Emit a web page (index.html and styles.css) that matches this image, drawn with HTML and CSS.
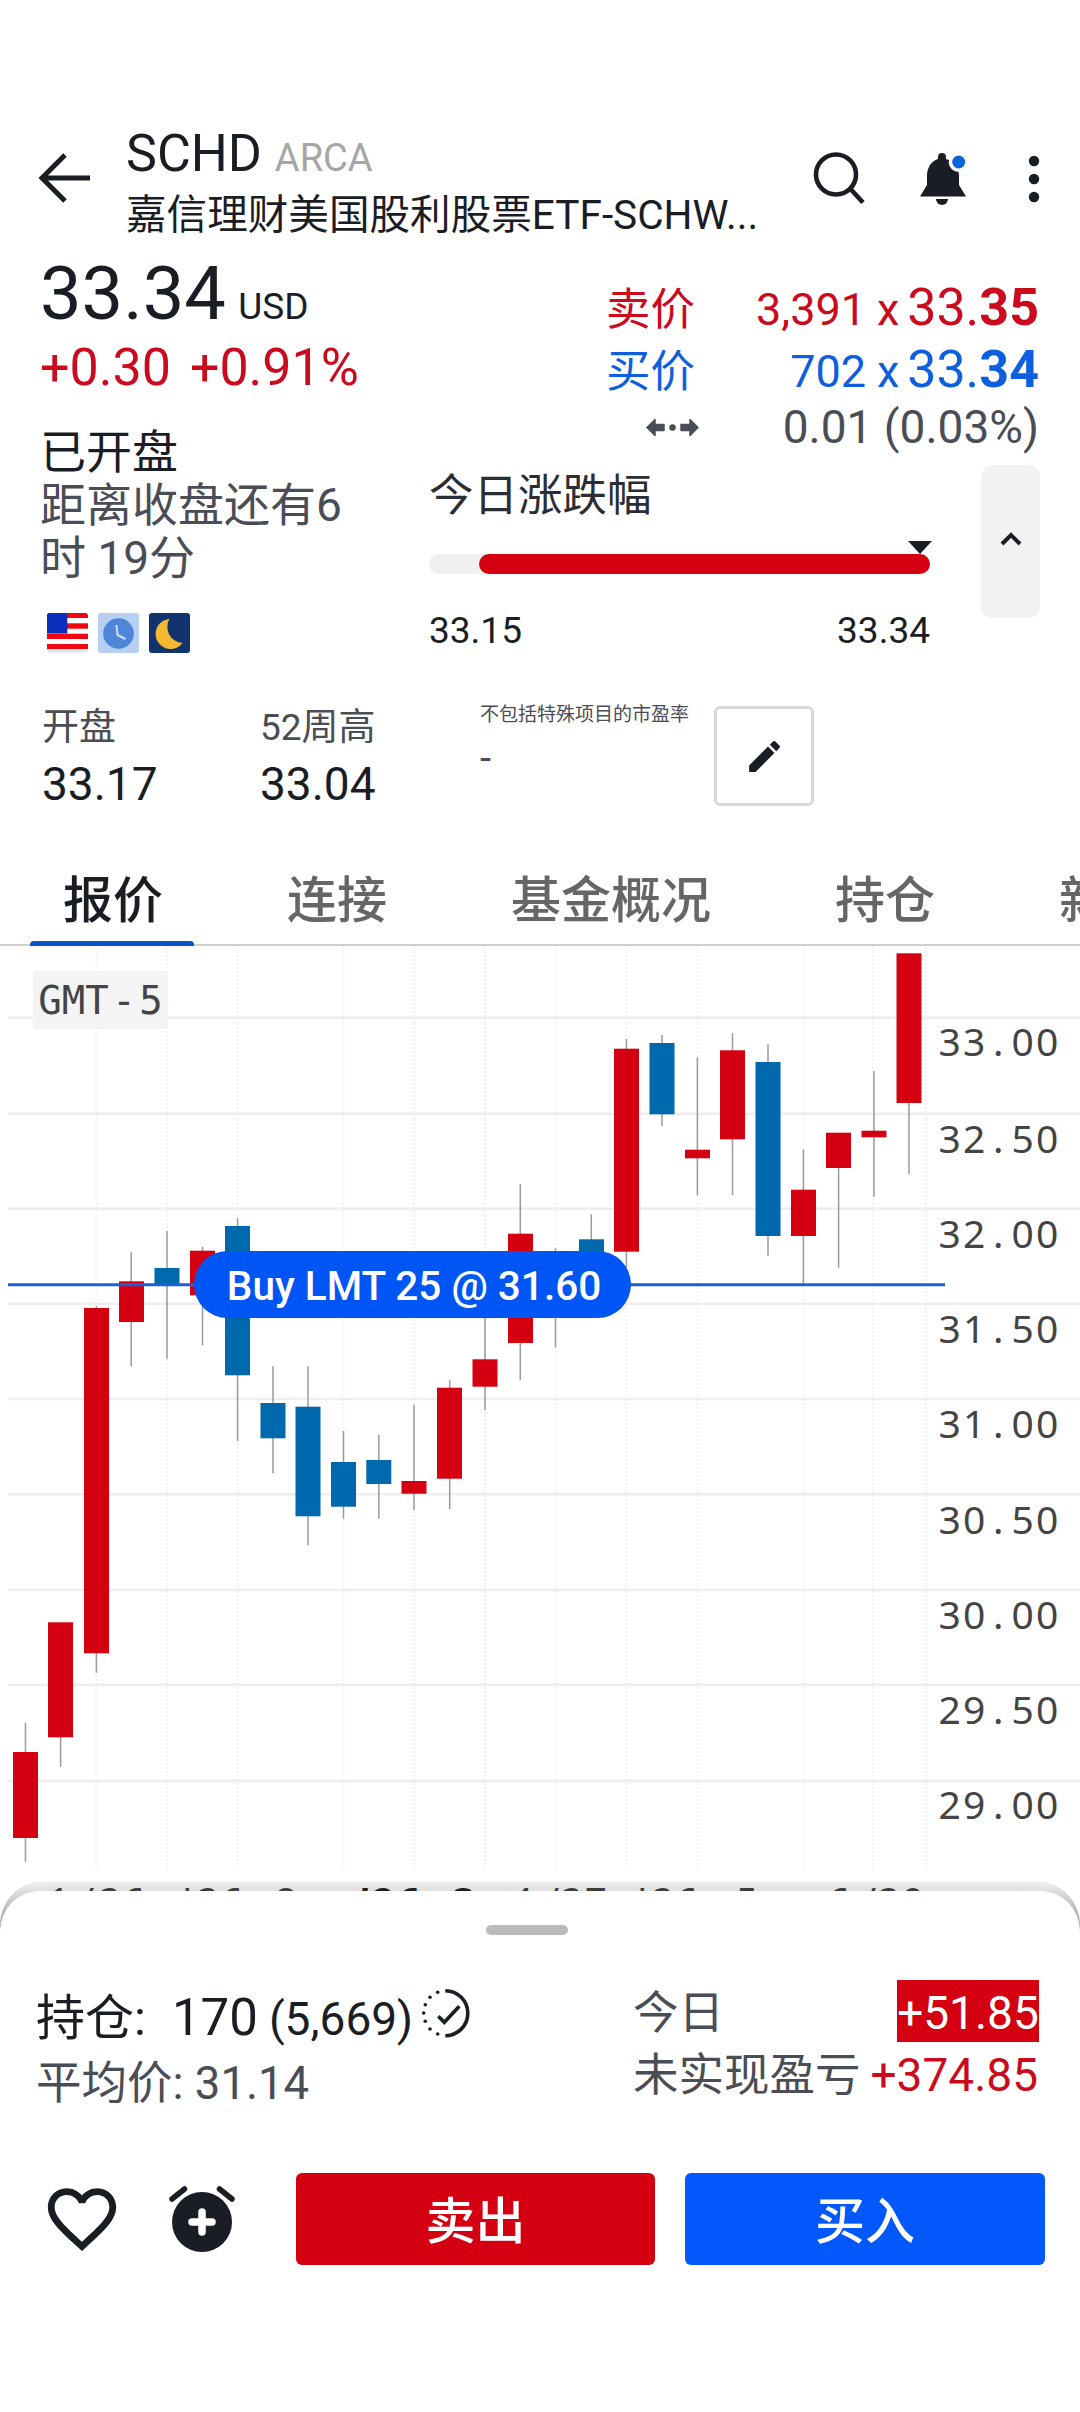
FILE: index.html
```html
<!DOCTYPE html>
<html lang="zh">
<head>
<meta charset="utf-8">
<title>SCHD</title>
<link rel="stylesheet" href="styles.css">
</head>
<body>
<div class="app">
  <header class="header">
    <svg class="back" viewBox="0 0 54 52"><path d="M52 26H4M27 3L4 26L27 49"/></svg>
    <div class="title-block">
      <div class="title"><span class="sym">SCHD</span> <span class="exch">ARCA</span></div>
      <div class="subtitle">嘉信理财美国股利股票ETF-SCHW...</div>
    </div>
    <div class="head-icons">
      <svg class="ic-search" viewBox="0 0 52 52"><circle cx="23" cy="22.5" r="20"/><path d="M37.5 37L50 50.5"/></svg>
      <svg class="ic-bell" viewBox="0 0 50 54"><path class="ink" d="M24 1a4 4 0 0 1 4 4v2C36 9 41 16 41 24V33L48 44.5H2L9 33V24C9 16 13 9 20 7V5a4 4 0 0 1 4-4z"/><path class="ink" d="M18 47h12a6 6 0 0 1-12 0z"/><circle class="ring" cx="40.7" cy="10" r="10"/><circle class="dot" cx="40.7" cy="10" r="6.5"/></svg>
      <svg class="ic-more" viewBox="0 0 12 48"><circle cx="6" cy="6" r="5.2"/><circle cx="6" cy="24" r="5.2"/><circle cx="6" cy="42" r="5.2"/></svg>
    </div>
  </header>

  <section class="summary">
    <div class="left-col">
      <div class="price"><span class="last">33.34</span> <span class="ccy">USD</span></div>
      <div class="change"><span>+0.30</span><span>+0.91%</span></div>
      <div class="status">
        <div class="status-main">已开盘</div>
        <div class="status-sub">距离收盘还有6<br>时 19分</div>
      </div>
      <div class="flags">
        <svg class="flag" viewBox="0 0 41 40"><rect width="41" height="40" fill="#fff"/><rect width="41" height="5" fill="#f00511"/><rect y="10.3" width="41" height="5.4" fill="#f00511"/><rect y="20.7" width="41" height="5.3" fill="#f00511"/><rect y="31" width="41" height="5" fill="#f00511"/><rect y="36" width="41" height="4" fill="#e9e9e9"/><rect width="20.3" height="20.5" fill="#0a2dbd"/></svg>
        <svg class="flag" viewBox="0 0 41 40"><rect width="41" height="40" fill="#b7cff0"/><circle cx="20.5" cy="20.5" r="15.3" fill="#4f86d8"/><path d="M18.5 12L19.5 22L27.5 26" fill="none" stroke="#cfe0f7" stroke-width="2"/></svg>
        <svg class="flag" viewBox="0 0 41 40"><rect width="41" height="40" fill="#12346e"/><path d="M20.5 6A15 15 0 1 0 33.5 30A16 16 0 0 1 20.5 6z" fill="#f5b92f"/></svg>
      </div>
    </div>
    <div class="right-col">
      <div class="quote ask"><span class="q-label">卖价</span><span class="q-val"><span class="q-size">3,391</span> <span class="q-size q-x">x</span> <span>33.<b>35</b></span></span></div>
      <div class="quote bid"><span class="q-label">买价</span><span class="q-val"><span class="q-size">702</span> <span class="q-size q-x">x</span> <span>33.<b>34</b></span></span></div>
      <div class="spread">
        <svg class="ic-spread" viewBox="0 0 53 19"><path d="M1 9.5L9 1.5V6.5H18V12.5H9V17.5zM52 9.5L44 1.5V6.5H35V12.5H44V17.5z"/><circle cx="26.5" cy="9.5" r="2.5"/></svg>
        <span>0.01 (0.03%)</span>
      </div>
      <div class="range-row">
        <div class="range">
          <div class="range-title">今日涨跌幅</div>
          <div class="bar"><div class="bar-fill"></div><div class="bar-mark"></div></div>
          <div class="range-labels"><span>33.15</span><span>33.34</span></div>
        </div>
        <div class="collapse"><svg viewBox="0 0 22 14"><path d="M2 12L11 3L20 12"/></svg></div>
      </div>
    </div>
  </section>

  <section class="stats">
    <div class="stat stat-a"><div class="stat-label">开盘</div><div class="stat-val">33.17</div></div>
    <div class="stat stat-b"><div class="stat-label">52周高</div><div class="stat-val">33.04</div></div>
    <div class="stat stat-c"><div class="stat-small">不包括特殊项目的市盈率</div><div class="stat-dash">-</div></div>
    <div class="edit"><svg viewBox="0 0 24 24"><path d="M3 17.25V21h3.75L17.81 9.94l-3.75-3.75L3 17.25zM20.71 7.04c.39-.39.39-1.02 0-1.41l-2.34-2.34c-.39-.39-1.02-.39-1.41 0l-1.83 1.83 3.75 3.75 1.83-1.83z"/></svg></div>
  </section>

  <nav class="tabs">
    <div class="tab active">报价</div>
    <div class="tab">连接</div>
    <div class="tab">基金概况</div>
    <div class="tab">持仓</div>
    <div class="tab">新闻</div>
  </nav>

  <section class="chart">
    <svg class="plot" viewBox="0 946 1080 966">
      <path class="vgrid" d="M96.4 947V1870M167 947V1870M237.6 947V1870M343.3 947V1870M414 947V1870M485 947V1870M555.5 947V1870M626.4 947V1870M697.4 947V1870M803.4 947V1870M873 947V1870M926 947V1870"/>
      <path class="hgrid" d="M8 1017.7H1080M8 1113.7H1080M8 1208.7H1080M8 1303.7H1080M8 1399H1080M8 1494.3H1080M8 1590H1080M8 1684.7H1080M8 1781H1080"/>
      <path class="wick" d="M25.5 1722.7V1861.7M60.6 1737V1766.7M96.4 1305.7V1672.7M131.2 1252.3V1366.3M167 1231V1358.7M202.5 1246.7V1345.3M237.6 1218.3V1441M273 1366.3V1473.3M308 1366.3V1545.3M343.5 1431V1518.7M378.8 1435V1518.7M414 1404.7V1510M449.7 1380V1509M485 1270V1410M520.3 1184V1380M555.5 1248.3V1347.3M591.3 1214.3V1270M626.4 1039V1268M662 1035V1126.3M697.4 1057.3V1195.3M732.5 1033.3V1195M768 1044.3V1255.7M803.4 1149.3V1283.3M838.6 1132.7V1267.7M874 1071V1196.7M909 1103V1174"/>
      <rect class="up" x="13" y="1752" width="25" height="86"/>
      <rect class="up" x="48" y="1622.3" width="25" height="115"/>
      <rect class="up" x="84" y="1308" width="25" height="345.3"/>
      <rect class="up" x="119" y="1281.3" width="25" height="40.7"/>
      <rect class="down" x="154.5" y="1268" width="25" height="16"/>
      <rect class="up" x="190" y="1250.7" width="25" height="44.6"/>
      <rect class="down" x="225" y="1226" width="25" height="149.3"/>
      <rect class="down" x="260.5" y="1403" width="25" height="35.3"/>
      <rect class="down" x="295.5" y="1406.7" width="25" height="109.6"/>
      <rect class="down" x="331" y="1462" width="25" height="44.7"/>
      <rect class="down" x="366.3" y="1460" width="25" height="24"/>
      <rect class="up" x="401.5" y="1481" width="25" height="12.7"/>
      <rect class="up" x="437" y="1387.7" width="25" height="91"/>
      <rect class="up" x="472.5" y="1359.3" width="25" height="27.4"/>
      <rect class="up" x="508" y="1233.7" width="25" height="109.3"/>
      <rect class="down" x="579" y="1239.3" width="25" height="24"/>
      <rect class="up" x="614" y="1048.7" width="25" height="203"/>
      <rect class="down" x="649.5" y="1043" width="25" height="71.3"/>
      <rect class="up" x="685" y="1149.7" width="25" height="8.6"/>
      <rect class="up" x="720" y="1050.3" width="25" height="89"/>
      <rect class="down" x="755.5" y="1062" width="25" height="174"/>
      <rect class="up" x="791" y="1189.7" width="25" height="46.3"/>
      <rect class="up" x="826" y="1132.7" width="25" height="35.3"/>
      <rect class="up" x="861.5" y="1130.7" width="25" height="6.6"/>
      <rect class="up" x="896.5" y="953.3" width="25" height="149.7"/>
      <path class="order-line" d="M8 1284.7H945"/>
      <text class="axis" x="938.5 963 993 1011.5 1036" y="1056">33.00</text>
      <text class="axis" x="938.5 963 993 1011.5 1036" y="1152.7">32.50</text>
      <text class="axis" x="938.5 963 993 1011.5 1036" y="1247.5">32.00</text>
      <text class="axis" x="938.5 963 993 1011.5 1036" y="1342.7">31.50</text>
      <text class="axis" x="938.5 963 993 1011.5 1036" y="1438">31.00</text>
      <text class="axis" x="938.5 963 993 1011.5 1036" y="1534">30.50</text>
      <text class="axis" x="938.5 963 993 1011.5 1036" y="1628.7">30.00</text>
      <text class="axis" x="938.5 963 993 1011.5 1036" y="1723.5">29.50</text>
      <text class="axis" x="938.5 963 993 1011.5 1036" y="1819">29.00</text>
      <text class="xlabel" x="48 80 99 123" y="1915">1/26</text>
      <text class="xlabel" x="183 197 221 250 275" y="1915">'26 8</text>
      <text class="xlabel bold" x="360 372 398 430 453" y="1915">'26 3</text>
      <text class="xlabel" x="511 545 561 585" y="1915">4/27</text>
      <text class="xlabel" x="638 652 676 710 736" y="1915">'26 5</text>
      <text class="xlabel" x="828 862 878 902" y="1915">6/20</text>
    </svg>
    <div class="tz">GMT - 5</div>
    <div class="order-pill">Buy LMT 25 @ 31.60</div>
  </section>

  <div class="sheet-wrap">
    <div class="sheet">
      <div class="handle"></div>
      <div class="position">
        <div class="pos-left">
          <div class="pos-line"><span class="pos-label">持仓:</span><span class="pos-qty">170</span><span class="pos-val">(5,669)</span>
            <svg class="ic-check" viewBox="410 1980 70 70"><path class="arc" d="M444.3 1991.7A22.5 22.5 0 0 1 444.3 2036.7"/><path class="arc" d="M437.3 2017.3L443.3 2023.3L458.3 2007.3"/><g class="dots"><circle cx="436.7" cy="1993.3" r="1.8"/><circle cx="429" cy="1998.3" r="1.8"/><circle cx="424.3" cy="2005.7" r="1.8"/><circle cx="422.7" cy="2014" r="1.8"/><circle cx="424.3" cy="2022.3" r="1.8"/><circle cx="429" cy="2030" r="1.8"/><circle cx="436.7" cy="2035" r="1.8"/></g></svg>
          </div>
          <div class="pos-avg">平均价: 31.14</div>
        </div>
        <div class="pos-right">
          <div class="pnl-row"><span class="pnl-label">今日</span><span class="pnl-today">+51.85</span></div>
          <div class="pnl-row second"><span class="pnl-label">未实现盈亏</span><span class="pnl-total">+374.85</span></div>
        </div>
      </div>
      <div class="actions">
        <svg class="ic-heart" viewBox="0 0 24 24"><path d="M16.5 3c-1.74 0-3.41.81-4.5 2.09C10.91 3.81 9.24 3 7.5 3 4.42 3 2 5.42 2 8.5c0 3.78 3.4 6.86 8.55 11.54L12 21.35l1.45-1.32C18.6 15.36 22 12.28 22 8.5 22 5.42 19.58 3 16.5 3zm-4.4 15.55l-.1.1-.1-.1C7.14 14.24 4 11.39 4 8.5 4 6.5 5.5 5 7.5 5c1.54 0 3.04.99 3.57 2.36h1.87C13.46 5.99 14.96 5 16.5 5c2 0 3.5 1.5 3.5 3.5 0 2.89-3.14 5.74-7.9 10.05z"/></svg>
        <svg class="ic-alarm" viewBox="0 0 80 92"><circle class="bodyc" cx="40" cy="49" r="30"/><path class="ears" d="M10 26L22.5 16M57.5 16L70 26"/><path class="plus" d="M40 39V59M30 49H50"/></svg>
        <button class="btn sell">卖出</button>
        <button class="btn buy">买入</button>
      </div>
    </div>
  </div>
</div>
</body>
</html>
```

FILE: styles.css
```css
* { box-sizing: border-box; margin: 0; padding: 0; }
html, body { width: 1080px; height: 2412px; background: #fff; overflow: hidden; }
body { font-family: Roboto, "Noto Sans CJK SC", sans-serif; color: #1a1d24; }
.app { position: relative; width: 1080px; height: 2412px; padding-top: 124px; overflow: hidden; background: #fff; }

/* header */
.header { display: flex; height: 118px; padding-left: 38px; }
.back { width: 54px; height: 52px; margin-top: 28px; flex: none; fill: none; stroke: #1a1d24; stroke-width: 5; }
.title-block { margin-left: 34px; flex: 1; min-width: 0; }
.title { font-size: 52px; line-height: 60px; white-space: nowrap; }
.exch { font-size: 38px; line-height: 1; color: #a6a6a6; margin-left: 0; }
.subtitle { font-size: 40.6px; line-height: 50px; margin-top: 6px; white-space: nowrap; }
.head-icons { display: flex; align-items: flex-start; margin-top: 28px; flex: none; width: 267px; }
.ic-search { width: 52px; height: 52px; fill: none; stroke: #1a1d24; stroke-width: 4.6; }
.ic-bell { width: 50px; height: 54px; margin-left: 53px; }
.ic-bell .ink { fill: #1a1d24; }
.ic-bell .ring { fill: #fff; }
.ic-bell .dot { fill: #0a66d8; }
.ic-more { width: 12px; height: 48px; margin-left: 60px; margin-top: 3px; fill: #1a1d24; }

/* summary */
.summary { display: flex; }
.left-col { width: 429px; padding-left: 40px; flex: none; }
.price { margin-top: 12px; font-size: 74px; line-height: 80px; white-space: nowrap; }
.ccy { font-size: 37px; line-height: 1; margin-left: -6px; }
.change { display: flex; gap: 19px; margin-top: 4px; font-size: 52px; line-height: 60px; color: #cc0a1e; }
.status { margin-top: 28px; padding-bottom: 1px; line-height: 53px; font-size: 46px; }
.status-sub { color: #4a4d55; }
.flags { display: flex; gap: 10px; margin-top: 27px; margin-left: 7px; }
.flag { width: 41px; height: 40px; border-radius: 3px; }

.right-col { width: 611px; flex: none; }
.quote { display: flex; justify-content: space-between; align-items: baseline; margin-left: 177px; width: 433px; font-size: 52px; line-height: 58px; white-space: nowrap; }
.ask { margin-top: 37px; color: #cc0a1e; }
.bid { margin-top: 4px; color: #0d5fe0; }
.quote b { font-weight: 700; }
.q-label { font-size: 44.5px; line-height: 1; }
.q-val { word-spacing: -2px; }
.q-size { font-size: 45px; line-height: 1; }
.q-x { margin-right: -3px; }
.spread { display: flex; justify-content: space-between; align-items: center; margin-left: 217px; width: 393px; margin-top: 3px; font-size: 46px; line-height: 50px; color: #4a4d55; }
.ic-spread { width: 53px; height: 19px; fill: #4a4d55; stroke: #4a4d55; stroke-width: 1.5; stroke-linejoin: round; }

.range-row { display: flex; margin-top: 13px; }
.range { width: 501px; padding-top: 6px; flex: none; }
.range-title { font-size: 44.5px; line-height: 50px; color: #2a2d33; }
.bar { position: relative; height: 20px; margin-top: 33px; border-radius: 10px; background: #f0f0f0; }
.bar-fill { height: 20px; margin-left: 50px; border-radius: 10px; background: #d40011; }
.bar-mark { position: absolute; right: -2px; top: -13px; width: 0; height: 0; border-left: 12.5px solid transparent; border-right: 12.5px solid transparent; border-top: 13px solid #1a1d24; }
.range-labels { display: flex; justify-content: space-between; margin-top: 35px; font-size: 37px; line-height: 44px; }
.collapse { display: flex; justify-content: center; padding-top: 67px; width: 59px; height: 153px; margin-left: 51px; border-radius: 12px; background: #f2f2f2; }
.collapse svg { width: 22px; height: 14px; fill: none; stroke: #1a1d24; stroke-width: 4; }

/* stats */
.stats { display: flex; margin-top: 53px; padding-left: 42px; height: 100px; }
.stat-a { width: 218px; }
.stat-b { width: 220px; }
.stat-c { width: 234px; margin-top: -2px; }
.stat-label { font-size: 37px; line-height: 44px; color: #4a4d55; }
.stat-val { font-size: 46px; line-height: 52px; margin-top: 8px; }
.stat-small { font-size: 19px; line-height: 22px; color: #4a4d55; white-space: nowrap; }
.stat-dash { font-size: 40px; line-height: 40px; margin-top: 13px; color: #4a4d55; }
.edit { display: flex; align-items: center; justify-content: center; width: 100px; height: 100px; border: 3px solid #d8d8d8; border-radius: 6px; }
.edit svg { width: 41px; height: 41px; fill: #1a1d24; }

/* tabs */
.tabs { display: flex; gap: 58px; margin-top: 65px; height: 75px; padding-left: 30px; border-bottom: 2px solid #cfcfcf; white-space: nowrap; }
.tab { position: relative; height: 73px; padding: 0 33px; font-size: 50px; line-height: 60px; font-weight: 500; color: #666; flex: none; }
.tab.active { color: #1a1d24; }
.tab.active::after { content: ""; position: absolute; left: 0; right: 2px; bottom: -2px; height: 5px; border-radius: 4px 4px 0 0; background: #0a55c5; }

/* chart */
.chart { position: relative; height: 966px; }
.plot { display: block; width: 1080px; height: 966px; }
.hgrid { fill: none; stroke: #eeeeee; stroke-width: 2.5; }
.vgrid { fill: none; stroke: #eeeeee; stroke-width: 2; stroke-dasharray: 1.5 2.5; }
.wick { fill: none; stroke: #9a9a9a; stroke-width: 1.5; }
.up { fill: #d40011; }
.down { fill: #0068ad; }
.order-line { fill: none; stroke: #1f5fd6; stroke-width: 3; }
.axis { font-family: "Noto Sans", sans-serif; font-size: 39px; fill: #444; }
.xlabel { font-family: "Noto Sans", sans-serif; font-size: 38px; fill: #444; }
.xlabel.bold { font-weight: 700; fill: #222; }
.tz { position: absolute; left: 33px; top: 25px; width: 135px; height: 58px; display: flex; align-items: center; justify-content: center; background: #f4f4f4; font-family: "DejaVu Sans Mono", monospace; font-size: 39px; word-spacing: -20px; color: #444; white-space: nowrap; }
.order-pill { position: absolute; left: 194px; top: 305px; width: 437px; height: 67px; padding: 2px 0 0 3px; display: flex; align-items: center; justify-content: center; border-radius: 34px; background: #0055f5; color: #fff; font-size: 40.5px; font-weight: 500; white-space: nowrap; }

/* bottom sheet */
.sheet-wrap { position: absolute; left: 0; right: 0; top: 1881px; bottom: 0; border-radius: 44px 44px 0 0; background: linear-gradient(rgba(0,0,0,.05) 0, rgba(0,0,0,.42) 48px, rgba(0,0,0,0) 50px); }
.sheet { height: 521px; margin-top: 10px; border-radius: 40px 40px 0 0; background: #fff; padding-top: 34px; position: absolute; left: 0; right: 0; top: 0; }
.handle { width: 82px; height: 10px; margin-left: 486px; border-radius: 5px; background: #bbb; }
.position { display: flex; margin-top: 45px; height: 132px; padding-left: 36px; }
.pos-left { width: 597px; flex: none; padding-top: 8px; }
.pos-line { display: flex; align-items: baseline; height: 60px; white-space: nowrap; line-height: 60px; }
.pos-label { font-size: 49px; }
.pos-qty { font-size: 51px; margin-left: 26px; }
.pos-val { font-size: 46px; margin-left: 11px; }
.ic-check { align-self: flex-start; width: 70px; height: 70px; margin: -9px 0 -1px -2px; flex: none; }
.ic-check .arc { fill: none; stroke: #1a1d24; stroke-width: 3.6; }
.ic-check .dots { fill: #1a1d24; }
.pos-avg { font-size: 45.5px; line-height: 56px; margin-top: 8px; color: #4a4d55; white-space: nowrap; }
.pos-right { width: 406px; flex: none; }
.pnl-row { display: flex; justify-content: space-between; align-items: baseline; white-space: nowrap; }
.pnl-row.second { margin-top: 5px; line-height: 56px; }
.pnl-label { font-size: 45.5px; line-height: 1; color: #4a4d55; }
.pnl-today { font-size: 46px; line-height: 58px; padding-top: 4px; width: 142px; text-align: center; background: #d40011; color: #fff; }
.pnl-total { font-size: 46px; color: #cc0a1e; margin-right: 1px; }
.actions { display: flex; align-items: center; height: 92px; margin-top: 61px; padding-left: 41px; }
.ic-heart { width: 82px; height: 82px; flex: none; fill: #1a1d24; }
.ic-alarm { width: 80px; height: 92px; margin-left: 39px; flex: none; }
.ic-alarm .bodyc { fill: #1a1d24; }
.ic-alarm .ears { fill: none; stroke: #1a1d24; stroke-width: 5.5; stroke-linecap: round; }
.ic-alarm .plus { fill: none; stroke: #fff; stroke-width: 7.5; stroke-linecap: round; }
.btn { height: 92px; padding-bottom: 4px; border: 0; border-radius: 6px; color: #fff; font-family: Roboto, "Noto Sans CJK SC", sans-serif; font-size: 50px; font-weight: 500; flex: none; }
.sell { width: 359px; margin-left: 54px; background: #d40011; }
.buy { width: 360px; margin-left: 30px; background: #0358fb; }
```
